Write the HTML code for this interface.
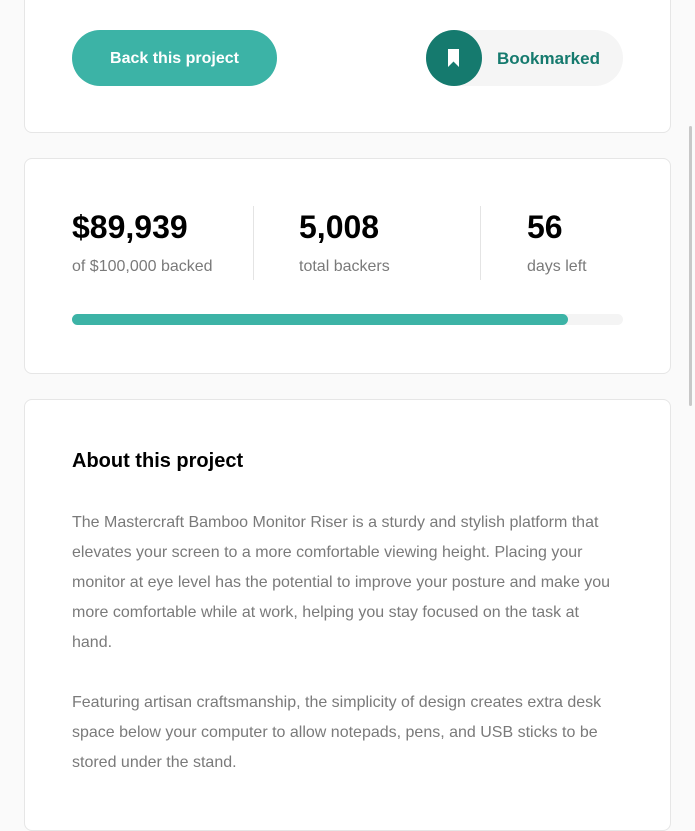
<!DOCTYPE html>
<html><head><style>
body{margin:0;background:#fafafa;font-family:"Liberation Sans",sans-serif;width:695px;height:800px;overflow:hidden;position:relative}
.card{position:absolute;left:24px;width:645px;background:#fff;border:1px solid #e6e6e6;border-radius:8px}
.btn{position:absolute;left:47px;width:205px;height:56px;border-radius:28px;background:#3cb3a6;color:#fff;font-weight:bold;font-size:16px;line-height:58px;text-align:center}
.bm{position:absolute;left:401px;width:197px;height:56px;border-radius:28px;background:#f5f5f5}
.circ{position:absolute;left:0;top:0;width:56px;height:56px;border-radius:50%;background:#157a6e}
.bm span{position:absolute;left:71px;top:0;line-height:58px;font-weight:bold;font-size:17px;color:#157a6e}
.stat{position:absolute;top:48px}
.stat b{display:block;font-size:32px;color:#000;line-height:40px}
.stat i{font-style:normal;display:block;color:#7a7a7a;font-size:16px;margin-top:11px}
.div{position:absolute;top:47px;width:1px;height:74px;background:#e4e4e4}
p{margin:0;color:#7a7a7a;font-size:16px;line-height:30px}
</style></head><body>
<div class="card" style="top:-10px;height:141px">
 <div class="btn" style="top:39px">Back this project</div>
 <div class="bm" style="top:39px"><div class="circ"><svg width="56" height="56"><path d="M22 19h11v18l-5.5-5.5-5.5 5.5z" fill="#fff"/></svg></div><span>Bookmarked</span></div>
</div>
<div class="card" style="top:158px;height:214px">
 <div class="stat" style="left:47px"><b>$89,939</b><i>of $100,000 backed</i></div>
 <div class="div" style="left:228px"></div>
 <div class="stat" style="left:274px"><b>5,008</b><i>total backers</i></div>
 <div class="div" style="left:455px"></div>
 <div class="stat" style="left:502px"><b>56</b><i>days left</i></div>
 <div style="position:absolute;left:47px;top:155px;width:551px;height:11px;border-radius:6px;background:#f4f4f4"><div style="width:496px;height:11px;border-radius:6px;background:#3cb3a6"></div></div>
</div>
<div class="card" style="top:399px;height:430px">
 <div style="position:absolute;left:47px;top:50px;font-weight:bold;font-size:20px;color:#000">About this project</div>
 <div style="position:absolute;left:47px;top:108px;width:545px">
 <p>The Mastercraft Bamboo Monitor Riser is a sturdy and stylish platform that elevates your screen to a more comfortable viewing height. Placing your monitor at eye level has the potential to improve your posture and make you more comfortable while at work, helping you stay focused on the task at<br>hand.</p>
 <p style="margin-top:30px">Featuring artisan craftsmanship, the simplicity of design creates extra desk space below your computer to allow notepads, pens, and USB sticks to be stored under the stand.</p>
 </div>
</div>
<div style="position:absolute;left:689px;top:126px;width:3px;height:280px;background:#c8c8c8;border-radius:2px"></div>
</body></html>
